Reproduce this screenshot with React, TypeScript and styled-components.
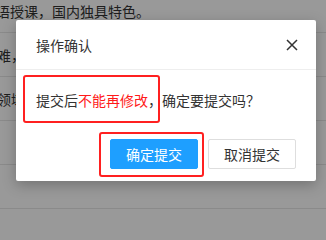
import React from "react";
import styled, { createGlobalStyle } from "styled-components";

const GlobalStyle = createGlobalStyle`
  html, body {
    margin: 0;
    padding: 0;
    min-height: 100%;
    overflow: hidden;
    background: #999;
    font-family: "Noto Sans CJK SC", "Noto Sans", "Liberation Sans", sans-serif;
  }
`;

const Page = styled.div`
  position: relative;
  width: 100vw;
  height: 100vh;
  min-height: 203px;
  overflow: hidden;
  background: #fff;
`;

const List = styled.div`
  display: flex;
  flex-direction: column;
  margin-top: -11px;
`;

const Row = styled.div<{ $shift: number }>`
  height: 43px;
  border-bottom: 1px solid #e6e6e6;
  display: flex;
  align-items: center;
  font-size: 14px;
  color: #333;
  white-space: nowrap;
  overflow: hidden;

  & > span {
    margin-left: ${p => p.$shift}px;
  }
`;

const Overlay = styled.div`
  position: absolute;
  inset: 0;
  background: rgba(0, 0, 0, 0.4);
`;

const Dialog = styled.div`
  position: absolute;
  left: 16px;
  top: 20px;
  width: 300px;
  background: #fff;
  border-radius: 2px;
  box-shadow: 0 4px 14px rgba(0, 0, 0, 0.25);
  display: flex;
  flex-direction: column;
`;

const Header = styled.div`
  height: 49px;
  display: flex;
  align-items: center;
  justify-content: space-between;
  padding: 0 18px 0 20px;
  border-bottom: 1px solid #eee;
`;

const Title = styled.span`
  font-size: 14px;
  color: #333;
`;

const Close = styled.button`
  width: 12px;
  height: 12px;
  padding: 0;
  border: none;
  background: none;
  display: flex;
  cursor: pointer;
`;

const Body = styled.div`
  padding: 19px 20px 16px;
  font-size: 14px;
  line-height: 22px;
  color: #333;
`;

const Warn = styled.span`
  color: #ff1a1a;
`;

const Footer = styled.div`
  display: flex;
  justify-content: flex-end;
  gap: 10px;
  padding: 12px 20px 12px;
`;

const Button = styled.button<{ $primary?: boolean }>`
  width: 88px;
  height: 30px;
  box-sizing: border-box;
  border-radius: 2px;
  font-family: inherit;
  font-size: 14px;
  cursor: pointer;
  border: 1px solid ${p => (p.$primary ? "#1e9fff" : "#dedede")};
  background: ${p => (p.$primary ? "#1e9fff" : "#fff")};
  color: ${p => (p.$primary ? "#fff" : "#333")};
`;

const Mark = styled.div<{ $x: number; $y: number; $w: number; $h: number }>`
  position: absolute;
  left: ${p => p.$x}px;
  top: ${p => p.$y}px;
  width: ${p => p.$w}px;
  height: ${p => p.$h}px;
  box-sizing: border-box;
  border: 2px solid #ff2020;
  border-radius: 3px;
  pointer-events: none;
`;

const rows = [
  { text: "语授课，国内独具特色。", shift: -4 },
  { text: "难，招生名额非常有限。", shift: -3 },
  { text: "领域研究方向多样。", shift: -3 },
  { text: "\u00a0", shift: 0 },
  { text: "\u00a0", shift: 0 },
];

export default function App() {
  return (
    <Page>
      <GlobalStyle />
      <List>
        {rows.map((r, i) => (
          <Row key={i} $shift={r.shift}>
            <span>{r.text}</span>
          </Row>
        ))}
      </List>
      <Overlay />
      <Dialog>
        <Header>
          <Title>操作确认</Title>
          <Close aria-label="关闭">
            <svg width="12" height="12" viewBox="0 0 12 12">
              <path d="M1 1L11 11M11 1L1 11" stroke="#333" strokeWidth="1.5" fill="none" />
            </svg>
          </Close>
        </Header>
        <Body>
          提交后<Warn>不能再修改</Warn>，确定要提交吗？
        </Body>
        <Footer>
          <Button $primary>确定提交</Button>
          <Button>取消提交</Button>
        </Footer>
        <Mark $x={7} $y={55} $w={137} $h={48} />
        <Mark $x={83} $y={112} $w={105} $h={45} />
      </Dialog>
    </Page>
  );
}
